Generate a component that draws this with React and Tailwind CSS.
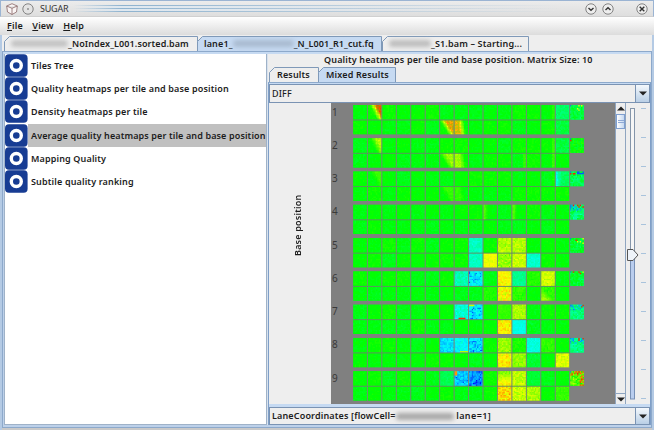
import React from "react";

/* colour scale: 0 blue, .25 cyan, .5 green, .75 yellow, 1 red */
const LEVELS = 64;
function scale(v) {
  const c = (n) => Math.round(Math.max(0, Math.min(1, n)) * 255);
  if (v < 0.25) return `rgb(0,${c(v * 4)},255)`;
  if (v < 0.5) return `rgb(0,255,${c((0.5 - v) * 4)})`;
  if (v < 0.75) return `rgb(${c((v - 0.5) * 4)},255,0)`;
  return `rgb(255,${c((1 - v) * 4)},0)`;
}

function hash(a, b, c) {
  let n = (Math.imul(a, 374761393) + Math.imul(b, 668265263) + Math.imul(c, 1442695041)) | 0;
  n = Math.imul(n ^ (n >>> 13), 1274126177);
  n = Math.imul(n ^ (n >>> 15), 2246822519);
  return ((n ^ (n >>> 16)) >>> 0) / 4294967295;
}

/* [base value, noise] keyed by group-row-column */
const TILES = {
  "1-0-14": [0.4, 0.03], "1-0-15": [0.43, 0.06],
  "2-0-14": [0.44, 0.03], "2-0-15": [0.49, 0.06], "1-1-14": [0.44, 0.03],
  "3-0-14": [0.41, 0.03], "3-0-15": [0.42, 0.07],
  "4-0-15": [0.4, 0.08],
  "5-0-8": [0.31, 0.03], "5-0-10": [0.67, 0.05], "5-0-11": [0.67, 0.05], "5-0-15": [0.45, 0.06],
  "5-1-8": [0.31, 0.03], "5-1-9": [0.73, 0.03], "5-1-10": [0.64, 0.07], "5-1-11": [0.69, 0.05], "5-1-12": [0.3, 0.03],
  "6-0-7": [0.32, 0.05], "6-0-8": [0.24, 0.06], "6-0-10": [0.75, 0.05], "6-0-11": [0.36, 0.03], "6-0-12": [0.53, 0.02], "6-0-13": [0.7, 0.05], "6-0-15": [0.45, 0.07],
  "6-1-10": [0.74, 0.07], "6-1-11": [0.54, 0.03], "6-1-13": [0.54, 0.03], "6-1-9": [0.53, 0.02],
  "7-0-7": [0.29, 0.05], "7-0-8": [0.24, 0.06], "7-0-10": [0.55, 0.02], "7-0-11": [0.66, 0.05], "7-0-15": [0.38, 0.06],
  "7-1-10": [0.76, 0.06], "7-1-11": [0.27, 0.02], "7-1-12": [0.47, 0.03],
  "8-0-6": [0.22, 0.05], "8-0-7": [0.25, 0.05], "8-0-8": [0.22, 0.06], "8-0-10": [0.64, 0.05], "8-0-11": [0.52, 0.03], "8-0-12": [0.28, 0.03], "8-0-13": [0.54, 0.03], "8-0-15": [0.37, 0.06],
  "8-1-10": [0.75, 0.07], "8-1-11": [0.64, 0.05], "8-1-12": [0.45, 0.03], "8-1-14": [0.71, 0.05],
  "9-0-6": [0.42, 0.02], "9-0-7": [0.2, 0.06], "9-0-8": [0.15, 0.06], "9-0-10": [0.7, 0.04], "9-0-11": [0.68, 0.05], "9-0-12": [0.45, 0.02], "9-0-15": [0.58, 0.1],
  "9-1-10": [0.78, 0.08], "9-1-11": [0.69, 0.06], "9-1-12": [0.66, 0.05], "9-1-14": [0.55, 0.02],
};

function value(g, r, c, i, j) {
  const seed = g * 1000 + r * 500 + c * 17;
  const drift = (hash(seed, 91, 7) - 0.6) * 0.04;
  const t = TILES[`${g}-${r}-${c}`] || [0.495 + drift, 0.018];
  let v = t[0] + (hash(seed, i, j) - 0.5) * 2 * t[1];
  const fade = [0, 1, 0.5, 0.2][g] || 0;
  if (r === 0 && c === 1) v += fade * Math.max(0, Math.min(0.42, (i - j * 0.55 - 1.2) * 0.09));
  if (r === 1 && c === 6) v += fade * Math.max(0, Math.min(0.34, (i - j * 0.65 + 0.5) * 0.085));
  if (r === 1 && c === 7) v += fade * Math.max(0, Math.min(0.34, (6.5 - i + j * 0.15) * 0.09));
  if (g < 4 && r === 0 && c === 13 && i > 7) v += 0.05;
  if (g === 3 && r === 0 && c === 14) v -= Math.max(0, (4 - i) * 0.04);
  if (g === 4 && r === 0 && (c === 9 || c === 11)) v += Math.max(0, (3 - i) * 0.035);
  if (g === 2 && r === 1 && (c === 11 || c === 13) && i > 7) v += 0.07;
  if (g === 6 && r === 1 && c === 13) v += Math.max(0, (j - i) * 0.02);
  if (g === 9 && r === 0 && c === 10) v += (j - 5) * 0.02;
  if (g > 5 && r === 0 && c === 8 && hash(seed + 3, i, j) > 0.8) v -= 0.11;
  if (g === 9 && r === 0 && c === 7 && hash(seed + 3, i, j) > 0.85) v -= 0.08;
  if (g === 7 && r === 0 && c === 7 && j === 9 && i > 2 && i < 8) v = 0.96;
  if (g === 7 && r === 0 && c === 8 && j === 0 && i < 4) v = 0.7;
  if (g === 8 && r === 0 && c === 7 && j === 9 && i > 3) v = 0.68;
  if (g === 9 && r === 0 && c === 7 && j < 3 && i < 2) v = 0.85;
  if (c === 15) {
    const n = hash(seed + 5, i, j);
    if ((g === 4 || g === 7 || g === 8) && j < 4 && n > 0.5) v = 0.05 + n * 0.14;
    if (g === 3 && j < 2 && n > 0.5) v = 0.08;
    if ((g === 1 || g === 5 || g === 6) && j < 4 && n > 0.87) v = 0.72;
    if (g === 9 && (i > 6 || j < 3) && n > 0.5) v = 0.74 + n * 0.22;
    if (j < 2 && n > 0.9) v = 0.97;
    if (i === 0 && j === 0) v = 0.12;
  }
  return Math.max(0, Math.min(0.999, v));
}

function buildPaths() {
  const out = Array.from({ length: LEVELS }, () => "");
  for (let g = 1; g <= 9; g++)
    for (let r = 0; r < 2; r++)
      for (let c = 0; c < 16 - r; c++) {
        const x = 22.3 + c * 14.45;
        const y = 2 + (g - 1) * 33.28 + r * 15.3;
        const h = r ? 13.9 : 14.6;
        for (let i = 0; i < 10; i++)
          for (let j = 0; j < 10; j++) {
            const k = Math.floor(value(g, r, c, i, j) * LEVELS);
            out[k] += `M${(x + i * 1.375).toFixed(2)} ${(y + (j * h) / 10).toFixed(2)}h1.375v${(h / 10).toFixed(2)}h-1.375z`;
          }
      }
  return out;
}
const PATHS = buildPaths();

/* average colour under each tile, so that cell seams stay in tone */
function tileBase(g, r, c) {
  const t = TILES[`${g}-${r}-${c}`];
  return scale(t ? t[0] : 0.495);
}

function Heatmap() {
  return (
    <svg width="284" height="301" viewBox="0 0 284 301" className="block shrink-0 bg-[#808080]">
      {Array.from({ length: 9 }, (_, g) => (
        <g key={g}>
          {[0, 1].map((r) =>
            Array.from({ length: 16 - r }, (_, c) => (
              <rect key={`${r}-${c}`} x={22.3 + c * 14.45} y={2 + g * 33.28 + r * 15.3} width="13.8" height={r ? 13.9 : 14.6} fill={tileBase(g + 1, r, c)} />
            ))
          )}
        </g>
      ))}
      {PATHS.map((d, k) => d && <path key={k} d={d} fill={scale((k + 0.5) / LEVELS)} />)}
      {Array.from({ length: 9 }, (_, g) => (
        <g key={g}>
          {Array.from({ length: 15 }, (_, c) => (
            <path key={c} d={`M${22.3 + (c + 1) * 14.45 - 0.35} ${2 + g * 33.28}v29.2`} stroke="#768876" strokeWidth="0.9" />
          ))}
          <path d={`M22.3 ${17 + g * 33.28}h216.5`} stroke="#5d8f60" strokeWidth="0.8" />
          <text x="1" y={12.5 + g * 33.28} fontSize="10" fontWeight="400" letterSpacing="0" fill="#3a3a3a" fontFamily="Noto Sans, sans-serif">{g + 1}</text>
        </g>
      ))}
    </svg>
  );
}

function Tab({ w, active, className = "", children }) {
  return (
    <div className={"relative h-[15px] shrink-0 " + className} style={{ width: w }}>
      <svg className="absolute inset-0" width={w} height="15">
        <path d={`M.5 15V5.5L5.5 .5H${w - 0.5}V15`} fill={active ? "#c6daf2" : "#eeeeee"} stroke="#7f99b8" />
      </svg>
      <div className="relative flex h-[15px] items-center whitespace-pre">{children}</div>
    </div>
  );
}

function Smudge({ className }) {
  return <span className={"inline-block h-[7px] shrink-0 rounded-sm blur-[2px] " + className} />;
}

function Arrow({ up }) {
  return (
    <svg width="8" height="5" viewBox="0 0 8 5">
      <path d={up ? "M0 4.5L4 .5L8 4.5z" : "M0 .5H8L4 4.5z"} fill="#222" />
    </svg>
  );
}

function Combo({ className, children }) {
  return (
    <div className={"flex shrink-0 border border-[#7a93b3] bg-[#eeeeee] " + className}>
      <div className="flex flex-1 items-center whitespace-pre pl-[2px]">{children}</div>
      <div className="flex w-[14px] items-center justify-center border-l border-[#7a93b3] bg-linear-to-b from-[#f4f8fc] to-[#b9cfe6]">
        <Arrow />
      </div>
    </div>
  );
}

function WinButton({ d, className = "" }) {
  return (
    <svg width="12" height="12" viewBox="0 0 12 12" className={className}>
      <circle cx="6" cy="6" r="5.2" fill="#eee" stroke="#777" strokeWidth=".9" />
      <path d={d} fill="none" stroke="#333" strokeWidth="1.4" />
    </svg>
  );
}

const ITEMS = [
  "Tiles Tree",
  "Quality heatmaps per tile and base position",
  "Density heatmaps per tile",
  "Average quality heatmaps per tile and base position",
  "Mapping Quality",
  "Subtile quality ranking",
];

export default function App() {
  return (
    <div className="flex h-[430px] w-[654px] flex-col overflow-hidden border-t border-[#9bb4d3] bg-[#eeeeee] font-['Noto_Sans',sans-serif] text-[9px] leading-[12px] font-semibold tracking-[0.15px] text-[#1c1c1c]">
      <div className="flex h-[16px] shrink-0 items-center border-x border-b border-[#d0d0d0] border-x-[#9bb4d3] bg-linear-to-b from-[#ececec] to-[#dedede] pr-[5px] pl-[5px]">
        <svg width="12" height="12" viewBox="0 0 12 12" fill="#faf5f5" stroke="#866" strokeWidth=".8">
          <path d="M6 .7L11.3 3L10.5 9L6 11.5L1.5 9L.7 3zM.7 3L6 5.3L11.3 3M6 5.3V11.5" />
        </svg>
        <svg width="12" height="12" viewBox="0 0 12 12" className="ml-1">
          <circle cx="6" cy="6" r="5.2" fill="#e3e3e3" stroke="#777" strokeWidth=".9" />
          <circle cx="6" cy="6" r=".8" fill="#555" />
        </svg>
        <span className="ml-[6px] text-[9px] font-normal tracking-[-0.2px] text-[#333]">SUGAR</span>
        <div className="ml-[5px] flex h-[7px] w-[490px] flex-col justify-between bg-linear-to-r from-transparent via-[#dfe8f0] via-10% to-transparent">
          <div className="h-px bg-linear-to-r from-transparent via-[#8fb3cf] via-10% to-transparent" />
          <div className="h-px bg-linear-to-r from-transparent via-[#8fb3cf] via-10% to-transparent" />
          <div className="h-px bg-linear-to-r from-transparent via-[#8fb3cf] via-10% to-transparent" />
        </div>
        <div className="flex flex-1 justify-end">
          <WinButton d="M3.5 5L6 7.3L8.5 5" />
          <WinButton d="M3.5 7L6 4.7L8.5 7" className="ml-[5px]" />
          <WinButton d="M3.7 3.7L8.3 8.3M8.3 3.7L3.7 8.3" className="ml-[22px]" />
        </div>
      </div>
      <div className="flex h-[18px] shrink-0 items-center gap-[9.5px] bg-linear-to-b from-white to-[#dcdcdc] pl-[7px]">
        <span><u>F</u>ile</span>
        <span><u>V</u>iew</span>
        <span><u>H</u>elp</span>
      </div>
      <div className="flex min-h-0 flex-1 flex-col border-x-2 border-[#b4cae4] pt-px">
        <div className="flex h-[15px] shrink-0 pl-[2px]">
          <Tab w={194}>
            <Smudge className="ml-[7px] w-[57px] bg-[#c2c2c2]" />
            <span className="tracking-[0.1px]">_NoIndex_L001.sorted.bam</span>
          </Tab>
          <Tab w={185} active className="-ml-px">
            <span className="ml-[7px]">lane1_</span>
            <Smudge className="w-[61px] bg-[#a9bbd0]" />
            <span className="tracking-[0.05px]">_N_L001_R1_cut.fq</span>
          </Tab>
          <Tab w={147}>
            <Smudge className="ml-[7px] w-[42px] bg-[#bdbdbd]" />
            <span>_S1.bam – Starting...</span>
          </Tab>
        </div>
        <div className="flex min-h-0 flex-1 border-y-[3px] border-r border-l-2 border-[#bdd1ea] border-t-[#c6daf2] outline-1 -outline-offset-1 outline-[#8da9cb]">
          <div className="flex w-[263px] shrink-0 flex-col border border-t-0 border-[#9fb2c8] bg-white">
            {ITEMS.map((t, i) => (
              <div key={t} className="flex h-[23.2px] shrink-0 items-center overflow-hidden whitespace-nowrap">
                <svg width="23" height="23" viewBox="0 0 23 23" className="shrink-0">
                  <rect x="0" y=".2" width="22.6" height="22.6" rx="4" fill="#173c93" />
                  <circle cx="11.3" cy="11.5" r="5" fill="none" stroke="#fff" strokeWidth="3.4" />
                </svg>
                <div className={"flex h-full flex-1 items-center pt-px pl-[3px] " + (i === 3 ? "bg-[#c0c0c0] tracking-[0.12px]" : "")}>{t}</div>
              </div>
            ))}
          </div>
          <div className="flex min-w-0 flex-1 flex-col border-l border-[#d8e2ee]">
            <div className="h-[13px] shrink-0 pl-[56px] leading-[11px] whitespace-nowrap">Quality heatmaps per tile and base position. Matrix Size: 10</div>
            <div className="flex h-[15px] shrink-0 pl-[1px]">
              <Tab w={50}><span className="ml-[8px]">Results</span></Tab>
              <Tab w={78} active className="-ml-px"><span className="ml-[8px]">Mixed Results</span></Tab>
            </div>
            <div className="flex min-h-0 flex-1 flex-col border border-[#7f9fc8] border-t-[#8da9cb] bg-[#c6daf2] pt-px">
              <Combo className="h-[19px] font-medium">DIFF</Combo>
              <div className="flex h-[301px] shrink-0 bg-[#eeeeee]">
                <div className="flex w-[62px] shrink-0 justify-center pt-[89px] pr-[5px]">
                  <span className="h-[64px] rotate-180 tracking-[0.2px] [writing-mode:vertical-rl]">Base position</span>
                </div>
                <Heatmap />
                <div className="flex h-[301px] w-[11px] shrink-0 flex-col border-x border-[#8fa5c0]">
                  <div className="flex h-[11px] items-center justify-center"><Arrow up /></div>
                  <div className="flex h-[15px] flex-col items-center justify-center gap-px border border-[#7f9fd0] bg-linear-to-r from-white to-[#c5d8f0]">
                    <i className="h-px w-[6px] bg-[#8fa9d5]" /><i className="h-px w-[6px] bg-[#8fa9d5]" />
                  </div>
                  <div className="flex-1" />
                  <div className="flex h-[11px] items-center justify-center border-t border-[#8fa5c0]"><Arrow /></div>
                </div>
                <svg width="24" height="301" viewBox="0 0 24 301">
                  <rect x="4.5" y="5.5" width="4" height="155" fill="#f6f6f6" stroke="#8495aa" />
                  <rect x="4.5" y="152" width="4" height="144" fill="#b9cdee" stroke="#7890b5" />
                  {Array.from({ length: 11 }, (_, i) => (
                    <path key={i} d={`M15 ${5.5 + i * 29}h5`} stroke="#a9c3dc" />
                  ))}
                  <path d="M1.5 146.5H7L12 152L7 157.5H1.5z" fill="#eef3f9" stroke="#555" />
                </svg>
              </div>
              <div className="h-[3px] shrink-0" />
              <Combo className="h-[18px]">
                <span>LaneCoordinates [flowCell=</span>
                <Smudge className="w-[58px] bg-[#a8a8a8]" />
                <span className="tracking-[0.4px]"> lane=1]</span>
              </Combo>
            </div>
          </div>
        </div>
        <div className="h-[2px] shrink-0 bg-[#c9c9c9]" />
      </div>
    </div>
  );
}
